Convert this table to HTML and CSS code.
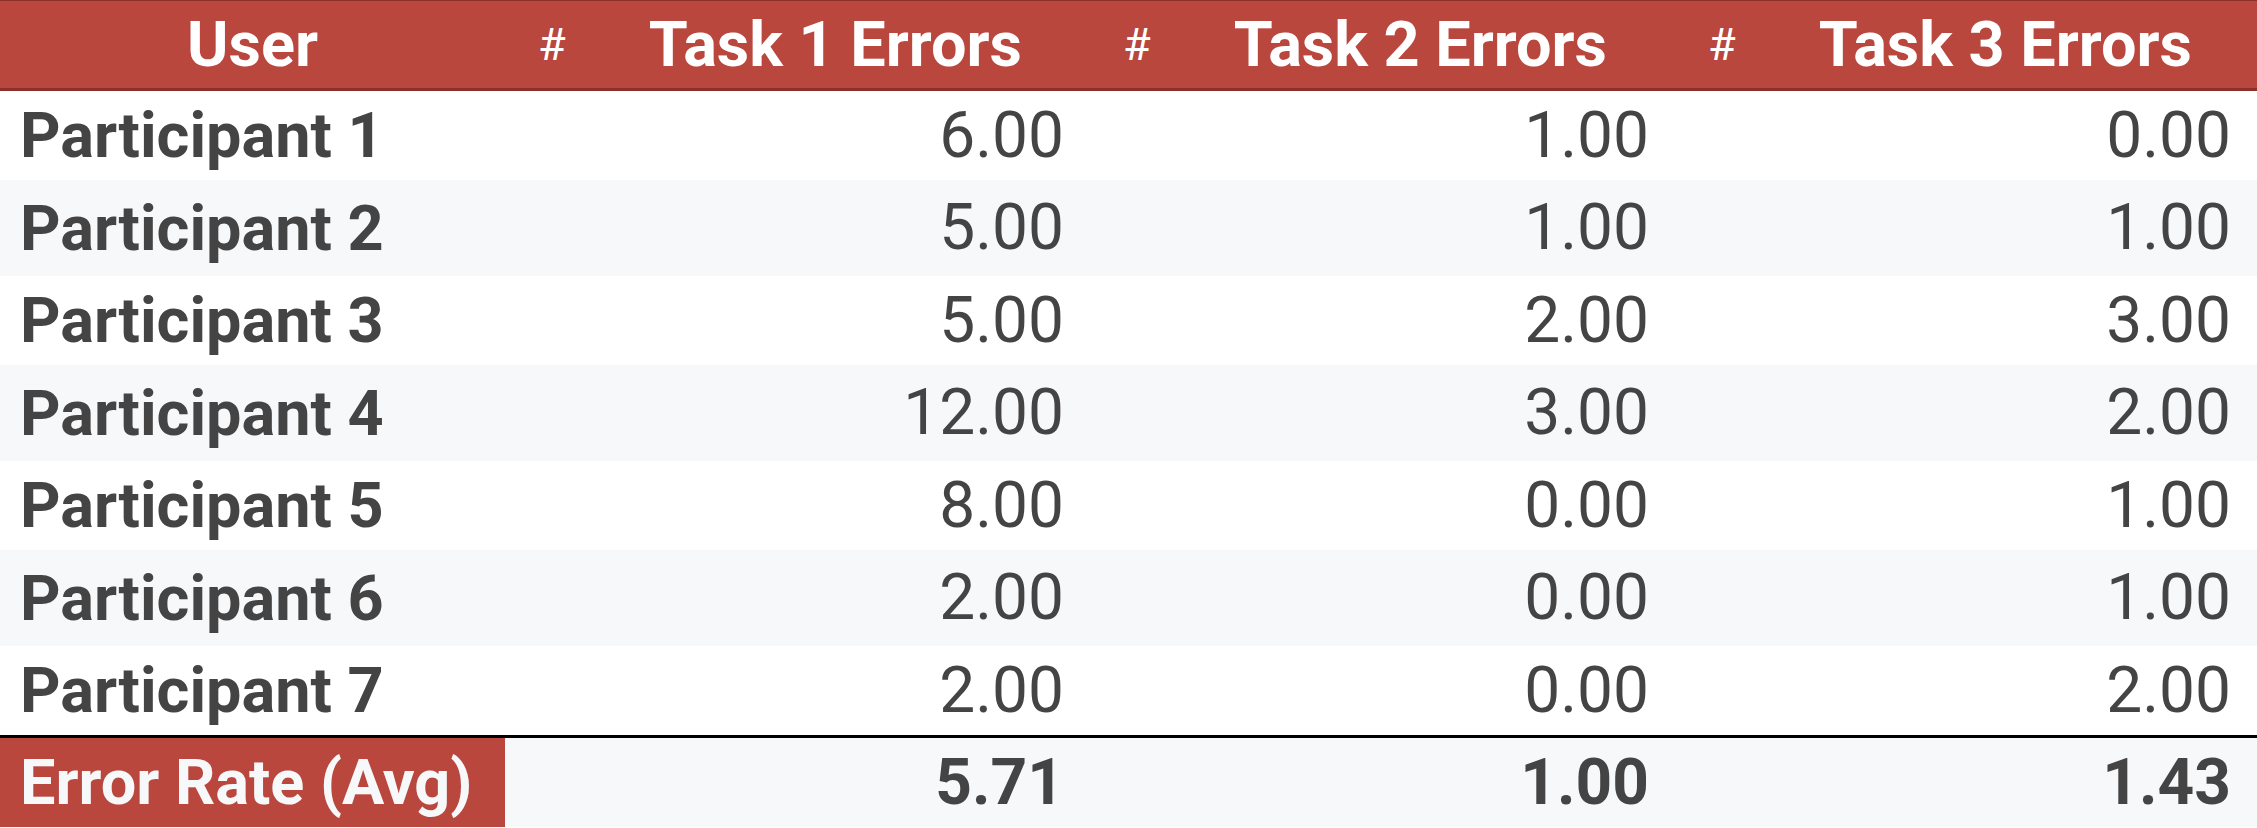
FILE: index.html
```html
<!DOCTYPE html>
<html>
<head>
<meta charset="utf-8">
<link rel="stylesheet" href="styles.css">
</head>
<body>
<table class="tbl">
  <colgroup>
    <col class="c-user">
    <col class="c-task">
    <col class="c-task">
    <col class="c-task3">
  </colgroup>
  <thead>
    <tr>
      <th class="h-user">User</th>
      <th class="h-task"><div class="hwrap"><span class="hash">#</span><span class="htitle">Task 1 Errors</span></div></th>
      <th class="h-task"><div class="hwrap"><span class="hash">#</span><span class="htitle">Task 2 Errors</span></div></th>
      <th class="h-task"><div class="hwrap"><span class="hash">#</span><span class="htitle">Task 3 Errors</span></div></th>
    </tr>
  </thead>
  <tbody>
    <tr><td class="name">Participant 1</td><td class="num">6.00</td><td class="num">1.00</td><td class="num">0.00</td></tr>
    <tr><td class="name">Participant 2</td><td class="num">5.00</td><td class="num">1.00</td><td class="num">1.00</td></tr>
    <tr><td class="name">Participant 3</td><td class="num">5.00</td><td class="num">2.00</td><td class="num">3.00</td></tr>
    <tr><td class="name">Participant 4</td><td class="num">12.00</td><td class="num">3.00</td><td class="num">2.00</td></tr>
    <tr><td class="name">Participant 5</td><td class="num">8.00</td><td class="num">0.00</td><td class="num">1.00</td></tr>
    <tr><td class="name">Participant 6</td><td class="num">2.00</td><td class="num">0.00</td><td class="num">1.00</td></tr>
    <tr><td class="name">Participant 7</td><td class="num">2.00</td><td class="num">0.00</td><td class="num">2.00</td></tr>
  </tbody>
  <tfoot>
    <tr>
      <td class="f-label">Error Rate (Avg)</td>
      <td class="num f-num">5.71</td>
      <td class="num f-num">1.00</td>
      <td class="num f-num">1.43</td>
    </tr>
  </tfoot>
</table>
</body>
</html>
```

FILE: styles.css
```css
html, body {
  margin: 0;
  padding: 0;
  background: #ffffff;
}

body {
  width: 2257px;
  height: 828px;
  overflow: hidden;
  font-family: Roboto, "Liberation Sans", sans-serif;
}

.tbl {
  width: 2257px;
  border-collapse: separate;
  border-spacing: 0;
  table-layout: fixed;
}

.c-user { width: 505px; }
.c-task { width: 585px; }
.c-task3 { width: 582px; }

thead tr {
  height: 91px;
}

th {
  padding: 0;
  background: #b9473e;
  color: #ffffff;
  font-weight: 700;
  font-size: 63px;
  line-height: 1;
  border-top: 1px solid #8e302a;
  border-bottom: 3px solid #8e302a;
  vertical-align: middle;
}

.h-task {
  background-image: linear-gradient(#c25a52, #c25a52);
  background-size: 2px 1px;
  background-position: 0 0;
  background-repeat: no-repeat;
  background-origin: border-box;
  background-clip: border-box;
}

.h-user {
  text-align: center;
}

.hwrap {
  display: flex;
  align-items: center;
  gap: 83px;
  padding-left: 33px;
}

.hash {
  font-size: 45px;
  font-weight: 400;
}

tbody tr {
  height: 89px;
}

tbody tr:nth-child(even) {
  height: 96px;
  background: #f7f8fa;
}

td {
  padding: 0;
  font-size: 64px;
  line-height: 1;
  color: #444444;
  vertical-align: middle;
}

.name {
  font-size: 63px;
  font-weight: 700;
  padding-left: 20px;
  white-space: nowrap;
}

.num {
  text-align: right;
  padding-right: 26px;
  font-weight: 400;
}

tfoot tr {
  height: 92px;
  background: #f7f8fa;
}

tfoot td {
  border-top: 3px solid #000000;
}

.f-label {
  background: #b9473e;
  color: #f7f8fa;
  font-size: 63px;
  font-weight: 700;
  padding-left: 20px;
  white-space: nowrap;
}

.f-num {
  font-weight: 700;
}
```
